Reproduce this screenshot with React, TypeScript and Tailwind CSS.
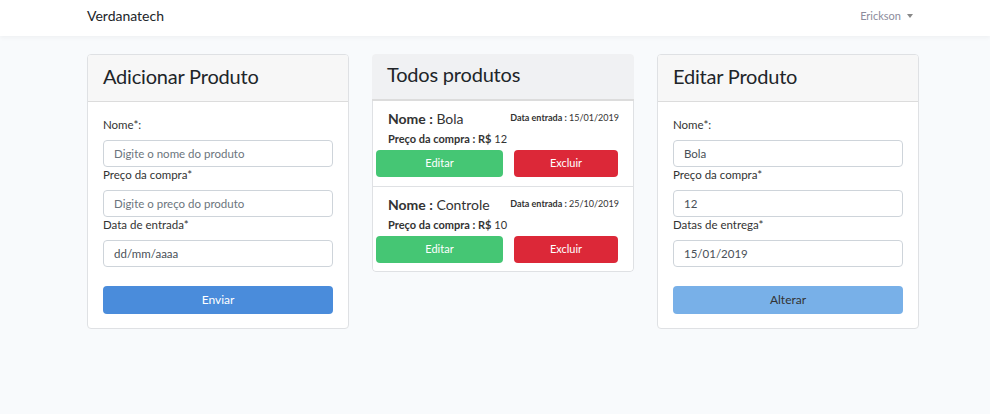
import React from 'react';

const font = { fontFamily: 'Lato, "Open Sans", sans-serif' };

function Field({ label, value, placeholder }: { label: string; value?: string; placeholder?: string }) {
  return (
    <div>
      <label className="block text-[11.5px] text-[#333] leading-[15px] mb-[8px]">{label}</label>
      <div
        className={`h-[27px] w-[230px] rounded-[4px] border border-[#ced4da] bg-white px-[10px] flex items-center text-[11.5px] ${
          value ? 'text-[#495057]' : 'text-[#6c757d]'
        }`}
      >
        {value ?? placeholder}
      </div>
    </div>
  );
}

function FormCard({
  title,
  fields,
  button,
  buttonClass,
}: {
  title: string;
  fields: { label: string; value?: string; placeholder?: string }[];
  button: string;
  buttonClass: string;
}) {
  return (
    <div className="w-[262px] h-[275px] bg-white border border-[#dfe1e4] rounded-[4px] overflow-hidden">
      <div className="h-[47px] bg-[#f7f7f7] border-b border-[#dcdcdc] px-[15px] pb-[5px] flex items-center">
        <h3 className="text-[20px] text-[#212529] leading-none tracking-[-0.2px]">{title}</h3>
      </div>
      <div className="px-[15px] pt-[15px]">
        <div className="flex flex-col">
          {fields.map((f, i) => (
            <Field key={i} {...f} />
          ))}
        </div>
        <button className={`mt-[19px] w-[230px] h-[28px] rounded-[4px] text-[12px] ${buttonClass}`}>{button}</button>
      </div>
    </div>
  );
}

const produtos = [
  { nome: 'Bola', preco: '12', data: '15/01/2019' },
  { nome: 'Controle', preco: '10', data: '25/10/2019' },
];

export default function App() {
  return (
    <div className="min-h-[414px] bg-[#f8fafc]" style={font}>
      <nav className="h-[36px] bg-white shadow-[0_2px_4px_rgba(0,0,0,0.04)] flex items-start justify-between pt-[7px] pl-[87px] pr-[77px]">
        <span className="text-[14px] text-[#212529] leading-[17px]">Verdanatech</span>
        <span className="text-[11px] text-[#8c8c9c] flex items-center gap-[6px] leading-[17px]">
          Erickson
          <span className="w-0 h-0 border-l-[3.5px] border-r-[3.5px] border-t-[4px] border-l-transparent border-r-transparent border-t-[#888]" />
        </span>
      </nav>

      <div className="flex items-start gap-[23px] pl-[87px] pt-[18px]">
        <FormCard
          title="Adicionar Produto"
          fields={[
            { label: 'Nome*:', placeholder: 'Digite o nome do produto' },
            { label: 'Preço da compra*', placeholder: 'Digite o preço do produto' },
            { label: 'Data de entrada*', value: 'dd/mm/aaaa' },
          ]}
          button="Enviar"
          buttonClass="bg-[#4a8cdb] text-white"
        />

        <div className="w-[262px] bg-white rounded-[4px] overflow-hidden">
          <div className="h-[47px] bg-[#f0f1f3] border-b-2 border-[#dcdcdc] px-[15px] pb-[5px] flex items-center">
            <h3 className="text-[20px] text-[#212529] leading-none tracking-[-0.2px]">Todos produtos</h3>
          </div>
          <div className="border-x border-b border-[#dfe1e4] rounded-b-[4px]">
            {produtos.map((p, i) => (
              <div key={i} className={`h-[85px] pt-[9px] ${i > 0 ? 'border-t border-[#dfe1e4]' : ''}`}>
                <div className="flex justify-between pl-[15px] pr-[14px]">
                  <span className="text-[14px] text-[#333] leading-[18px]">
                    <b className="font-bold">Nome :</b> {p.nome}
                  </span>
                  <span className="text-[9px] text-[#333] leading-[14px] mt-[1px]">
                    <b className="font-bold">Data entrada :</b> {p.data}
                  </span>
                </div>
                <div className="pl-[15px] text-[11px] text-[#333] leading-[14px] mt-[4px]">
                  <b className="font-bold">Preço da compra : R$</b> {p.preco}
                </div>
                <div className="flex pl-[3px] gap-[11px] mt-[4px]">
                  <button className="w-[127px] h-[27px] rounded-[4px] bg-[#45c674] text-white text-[11px]">Editar</button>
                  <button className="w-[104px] h-[27px] rounded-[4px] bg-[#dc2838] text-white text-[11px]">Excluir</button>
                </div>
              </div>
            ))}
          </div>
        </div>

        <FormCard
          title="Editar Produto"
          fields={[
            { label: 'Nome*:', value: 'Bola' },
            { label: 'Preço da compra*', value: '12' },
            { label: 'Datas de entrega*', value: '15/01/2019' },
          ]}
          button="Alterar"
          buttonClass="bg-[#78b0e8] text-[#333]"
        />
      </div>
    </div>
  );
}
